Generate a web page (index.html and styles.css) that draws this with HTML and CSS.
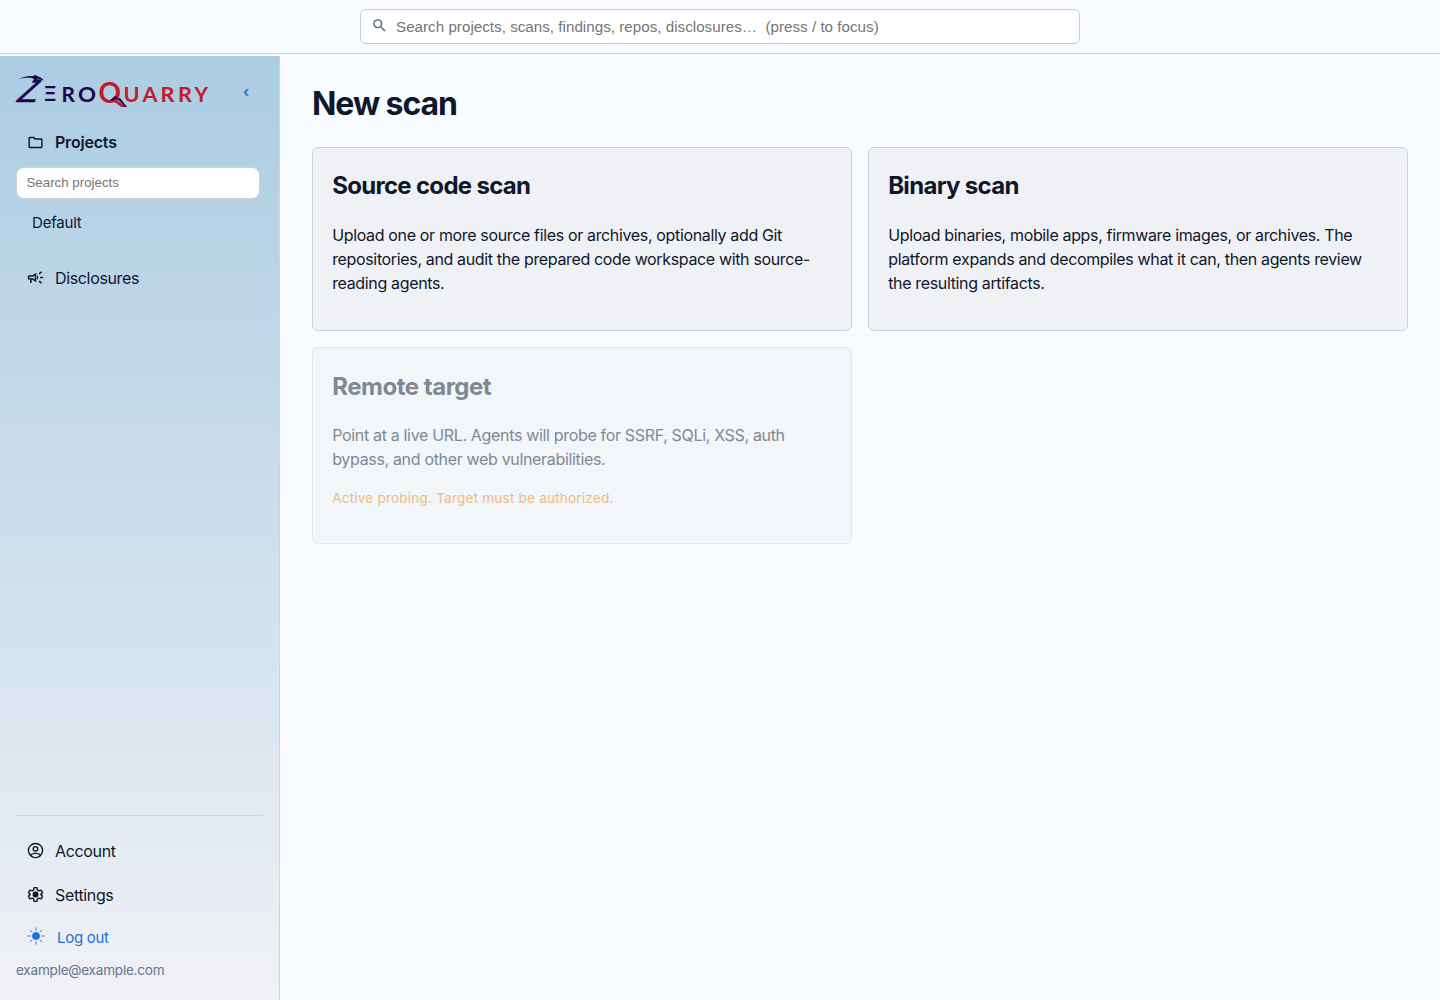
FILE: index.html
```html
<!DOCTYPE html>
<html lang="en">
<head>
    <meta charset="UTF-8">
    <title>New scan - ZeroQuarry</title>
    <link rel="stylesheet" href="styles.css">
</head>
<body>

    <header class="topbar">
        <form class="global-search">
            <svg class="search-icon" viewBox="0 0 24 24"><path d="M15.5 14h-.79l-.28-.27A6.47 6.47 0 0 0 16 9.5 6.5 6.5 0 1 0 9.5 16c1.61 0 3.09-.59 4.23-1.57l.27.28v.79l5 4.99L20.49 19l-4.99-5zm-6 0C7.01 14 5 11.99 5 9.5S7.01 5 9.5 5 14 7.01 14 9.5 11.99 14 9.5 14z"/></svg>
            <input type="text" placeholder="Search projects, scans, findings, repos, disclosures…  (press / to focus)">
        </form>
    </header>

    <div class="layout">
        <aside class="sidebar">
            <div class="brand">
                <svg class="logo" viewBox="0 0 194 34">
                    <defs>
                        <!-- the pickaxe head replaces the top bar of the Z -->
                        <clipPath id="handle"><path d="M-2 9H15L18.500 3H26V34H-2z"/></clipPath>
                    </defs>
                    <g class="logo-zero">
                        <g clip-path="url(#handle)">
                            <text class="logo-big" transform="translate(-1 26.700) skewX(-17)" x="0" y="0" textLength="21" lengthAdjust="spacingAndGlyphs">Z</text>
                        </g>
                        <path d="M2.500 4C8 1.200 13 .6 17 1L19.500 0L22 1.500C25 2.500 27 4 28 5.700C25 4.200 23 3.700 21.500 3.700L20 5.500L16.500 3.200C12 2.200 7 2.800 2.500 4z"/>
                        <text class="logo-bars" x="28" y="26.300" textLength="12.500" lengthAdjust="spacingAndGlyphs">Ξ</text>
                        <text x="45.500" y="26.500" textLength="13.500" lengthAdjust="spacingAndGlyphs">R</text>
                        <text x="62" y="26.500" textLength="18" lengthAdjust="spacingAndGlyphs">O</text>
                    </g>
                    <g class="logo-quarry">
                        <text class="logo-q" x="82.500" y="28" textLength="22.500" lengthAdjust="spacingAndGlyphs">O</text>
                        <text x="107.500" y="26.500" textLength="16" lengthAdjust="spacingAndGlyphs">U</text>
                        <text x="126.500" y="26.500" textLength="15" lengthAdjust="spacingAndGlyphs">A</text>
                        <text x="144.500" y="26.500" textLength="14" lengthAdjust="spacingAndGlyphs">R</text>
                        <text x="162" y="26.500" textLength="14" lengthAdjust="spacingAndGlyphs">R</text>
                        <text x="178.500" y="26.500" textLength="13.500" lengthAdjust="spacingAndGlyphs">Y</text>
                        <path d="M95 26L99.500 24L110 32H105L100 28z"/>
                    </g>
                    <path class="logo-peak" d="M93.500 25.500L99.500 20.500L101.500 23.500L104 23L111 32H109L103.500 26L99.500 23.500L97 25.500z"/>
                </svg>
                <a class="collapse" href="#">‹</a>
            </div>

            <nav class="nav">
                <a class="nav-item active" href="#">
                    <svg viewBox="0 0 24 24"><path d="M9.170 6l2 2H20v10H4V6h5.170M10 4H4c-1.100 0-1.990.9-1.990 2L2 18c0 1.100.9 2 2 2h16c1.100 0 2-.9 2-2V8c0-1.100-.9-2-2-2h-8l-2-2z"/></svg>
                    <span>Projects</span>
                </a>
                <input class="project-search" type="text" placeholder="Search projects">
                <a class="project" href="#">Default</a>
                <a class="nav-item" href="#">
                    <svg viewBox="1 1 22 22"><path d="M18 11v2h4v-2h-4zM16 17.610c.96.71 2.210 1.650 3.200 2.390.4-.53.8-1.070 1.200-1.600-.99-.74-2.240-1.680-3.200-2.400-.4.540-.8 1.080-1.200 1.610zM20.400 5.600c-.4-.53-.8-1.070-1.200-1.600-.99.74-2.240 1.680-3.200 2.400.4.530.8 1.070 1.200 1.600.96-.72 2.210-1.650 3.200-2.400zM4 9c-1.100 0-2 .9-2 2v2c0 1.100.9 2 2 2h1v4h2v-4h1l5 3V6L8 9H4zm5.030 1.710L11 9.530v4.940l-1.970-1.180-.48-.29H4v-2h4.550l.48-.29zM15.500 12c0-1.330-.58-2.530-1.500-3.350v6.690c.92-.81 1.500-2.010 1.500-3.340z"/></svg>
                    <span>Disclosures</span>
                </a>
            </nav>

            <div class="sidebar-footer">
                <a class="nav-item" href="#">
                    <svg viewBox="0 0 24 24"><path fill-rule="evenodd" d="M12 1a11 11 0 1 0 0 22 11 11 0 0 0 0-22zM6.300 18.900C7.400 17.600 9.600 17 12 17s4.600.6 5.700 1.900C16.100 20.200 14.100 21 12 21s-4.100-.8-5.700-2.100zM19.200 17.400C17.500 15.700 14.800 15 12 15s-5.500.7-7.200 2.400A9 9 0 1 1 19.200 17.400zM12 5.500a4.200 4.200 0 1 0 0 8.400 4.200 4.200 0 0 0 0-8.400zm0 2a2.200 2.200 0 1 1 0 4.400 2.200 2.200 0 0 1 0-4.400z"/></svg>
                    <span>Account</span>
                </a>
                <a class="nav-item" href="#">
                    <svg viewBox="0 0 24 24"><path class="gear" d="M10 2.300h4l.7 3.400 2 1.200 3.200-1.100 2 3.600-2.500 2.600 2.500 2.600-2 3.600-3.200-1.100-2 1.200-.7 3.400h-4l-.7-3.400-2-1.200-3.200 1.100-2-3.600L4.600 12 2.100 9.400l2-3.600 3.200 1.100 2-1.200z"/><circle cx="12" cy="12" r="4.200"/></svg>
                    <span>Settings</span>
                </a>
                <a class="logout" href="#">
                    <svg viewBox="0 0 18 18"><circle cx="9" cy="9" r="3.500"/><path d="M9 .5v3.300M9 14.200v3.300M.5 9h3.300M14.200 9h3.300M3 3l2.300 2.300M12.700 12.700L15 15M15 3l-2.300 2.300M5.300 12.700L3 15"/></svg>
                    <span>Log out</span>
                </a>
                <div class="email">example@example.com</div>
            </div>
        </aside>

        <main class="content">
            <h1>New scan</h1>
            <div class="cards">
                <a class="card" href="#">
                    <h2>Source code scan</h2>
                    <p>Upload one or more source files or archives, optionally add Git repositories, and audit the prepared code workspace with source-reading agents.</p>
                </a>
                <a class="card" href="#">
                    <h2>Binary scan</h2>
                    <p>Upload binaries, mobile apps, firmware images, or archives. The platform expands and decompiles what it can, then agents review the resulting artifacts.</p>
                </a>
                <div class="card disabled">
                    <h2>Remote target</h2>
                    <p>Point at a live URL. Agents will probe for SSRF, SQLi, XSS, auth bypass, and other web vulnerabilities.</p>
                    <p class="warning">Active probing. Target must be authorized.</p>
                </div>
            </div>
        </main>
    </div>

</body>
</html>
```

FILE: styles.css
```css
* {
    box-sizing: border-box;
}
body {
    margin: 0;
    font-family: Inter, "Liberation Sans", sans-serif;
    font-size: 16px;
    line-height: 1.5;
    letter-spacing: -0.35px;
    color: #0f172a;
    background: #f8fbff;
}
a {
    color: inherit;
    text-decoration: none;
}
input {
    font-family: "Liberation Sans", Arial, sans-serif;
    background: white;
    border: 1px solid #cbd2da;
}
input::placeholder {
    color: #757575;
}

/* top bar */
.topbar {
    height: 54px;
    display: flex;
    justify-content: center;
    align-items: flex-start;
    padding-top: 9px;
    border-bottom: 1px solid #cbd5dd;
}
.global-search {
    width: 720px;
    height: 35px;
    display: flex;
    align-items: center;
    background: white;
    border: 1px solid #c3ccd5;
    border-radius: 6px;
    padding-left: 10px;
}
.search-icon {
    width: 17px;
    height: 17px;
    margin-top: -3px;
    fill: #526580;
}
.global-search input {
    flex: 1;
    border: 0;
    padding: 0 8px;
    background: none;
    font-size: 15.2px;
    letter-spacing: 0.01px;
    white-space: pre;
}

.layout {
    display: flex;
    height: 946px;
}

/* sidebar */
.sidebar {
    width: 280px;
    margin-top: 2px;
    padding: 16px;
    display: flex;
    flex-direction: column;
    background: linear-gradient(#abcce3, #f0f1f5);
    border-right: 1px solid #cbd5dd;
}
.brand {
    display: flex;
    justify-content: space-between;
    align-items: center;
    height: 40px;
    padding-right: 14px;
    margin-bottom: 8px;
}
.logo {
    width: 194px;
    height: 34px;
    overflow: visible;
    font-family: Lato, sans-serif;
    font-size: 21px;
    font-weight: 700;
    letter-spacing: 0;
}
.logo-big {
    font-size: 31px;
    font-weight: 400;
    stroke: #20064d;
    stroke-width: 0.4;
}
.logo-bars {
    font-family: Inter, sans-serif;
    font-size: 20.5px;
    font-weight: 600;
}
.logo-q {
    font-size: 28px;
}
.logo-zero, .logo-peak {
    fill: #20064d;
}
.logo-quarry {
    fill: #c31b2b;
}
.collapse {
    font-size: 15px;
    font-weight: 600;
    color: #1d6fd8;
}
.nav {
    display: flex;
    flex-direction: column;
}
.nav-item {
    display: flex;
    align-items: center;
    gap: 11px;
    height: 44px;
    padding-left: 11px;
}
.nav-item svg {
    width: 17px;
    height: 17px;
    fill: currentColor;
}
.nav-item.active {
    font-weight: 600;
    letter-spacing: -0.2px;
}
.nav-item .gear {
    fill: none;
    stroke: currentColor;
    stroke-width: 2;
    stroke-linejoin: round;
}
.project-search {
    width: 244px;
    height: 32px;
    margin-top: 3px;
    padding: 0 9.5px 2px;
    border-radius: 8px;
    font-size: 13.3px;
    letter-spacing: 0;
}
.project {
    margin: 13px 0 21px;
    padding-left: 16px;
    font-size: 15px;
    letter-spacing: -0.2px;
}
.sidebar-footer {
    margin-top: auto;
    width: 247px;
    padding-top: 13px;
    border-top: 1px solid #cbd5dd;
}
.logout {
    display: flex;
    align-items: center;
    gap: 12px;
    height: 40px;
    margin-top: 2px;
    padding-left: 11px;
    font-size: 15px;
    letter-spacing: -0.3px;
    color: #1d6fd8;
}
.logout svg {
    width: 18px;
    height: 18px;
    margin-top: -5px;
    fill: currentColor;
    stroke: currentColor;
    stroke-width: 0.9;
}
.email {
    margin: 1px 0 4px;
    font-size: 13.6px;
    letter-spacing: -0.25px;
    color: #64748b;
}

/* main */
.content {
    flex: 1;
    padding: 26px 32px;
}
h1 {
    margin: 0 0 19px;
    font-size: 32px;
    letter-spacing: -1.05px;
}
.cards {
    display: grid;
    grid-template-columns: 1fr 1fr;
    gap: 16px;
}
.card {
    padding: 19.2px;
    background: #f0f1f5;
    border: 1px solid #cbd2da;
    border-radius: 6px;
}
.card h2 {
    margin: 1px 0 18.92px;
    font-size: 24px;
    letter-spacing: -0.7px;
}
.card p {
    margin: 0 0 16px;
}
.card.disabled {
    background: #f2f6f9;
    border-color: #e2e7ec;
    color: #808894;
    letter-spacing: -0.33px;
}
.card.disabled h2 {
    margin: 1.5px 0 18.42px;
    letter-spacing: -0.48px;
}
.card .warning {
    margin: 16.6px 0 15.4px;
    font-size: 13.6px;
    letter-spacing: 0.18px;
    color: #f1b982;
}
```
